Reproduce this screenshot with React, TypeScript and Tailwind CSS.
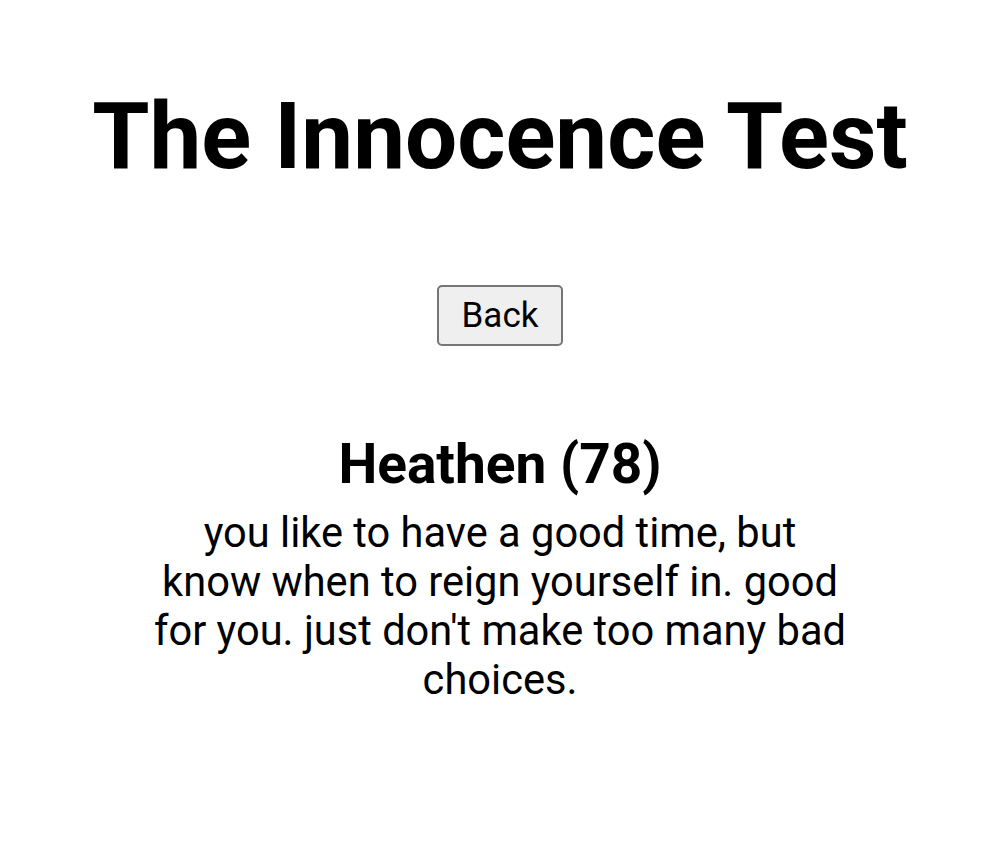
export default function App() {
  return (
    <div className="min-h-screen bg-white text-black flex flex-col items-center" style={{ fontFamily: 'Roboto, "Liberation Sans", sans-serif' }}>
      <h1 className="mt-[82px] text-[92.5px] leading-[109px] font-bold">The Innocence Test</h1>
      <button className="mt-[94px] h-[61px] px-[23px] text-[35px] leading-none border-2 border-[#767676] bg-[#efefef] rounded-[5px] text-black">
        Back
      </button>
      <h2 className="mt-[86px] text-[55px] leading-[64px] font-bold">Heathen (78)</h2>
      <p className="mt-[12px] w-[696px] text-center text-[41.6px] leading-[49px]">
        you like to have a good time, but know when to reign yourself in. good for you. just don't make too many bad choices.
      </p>
    </div>
  );
}
